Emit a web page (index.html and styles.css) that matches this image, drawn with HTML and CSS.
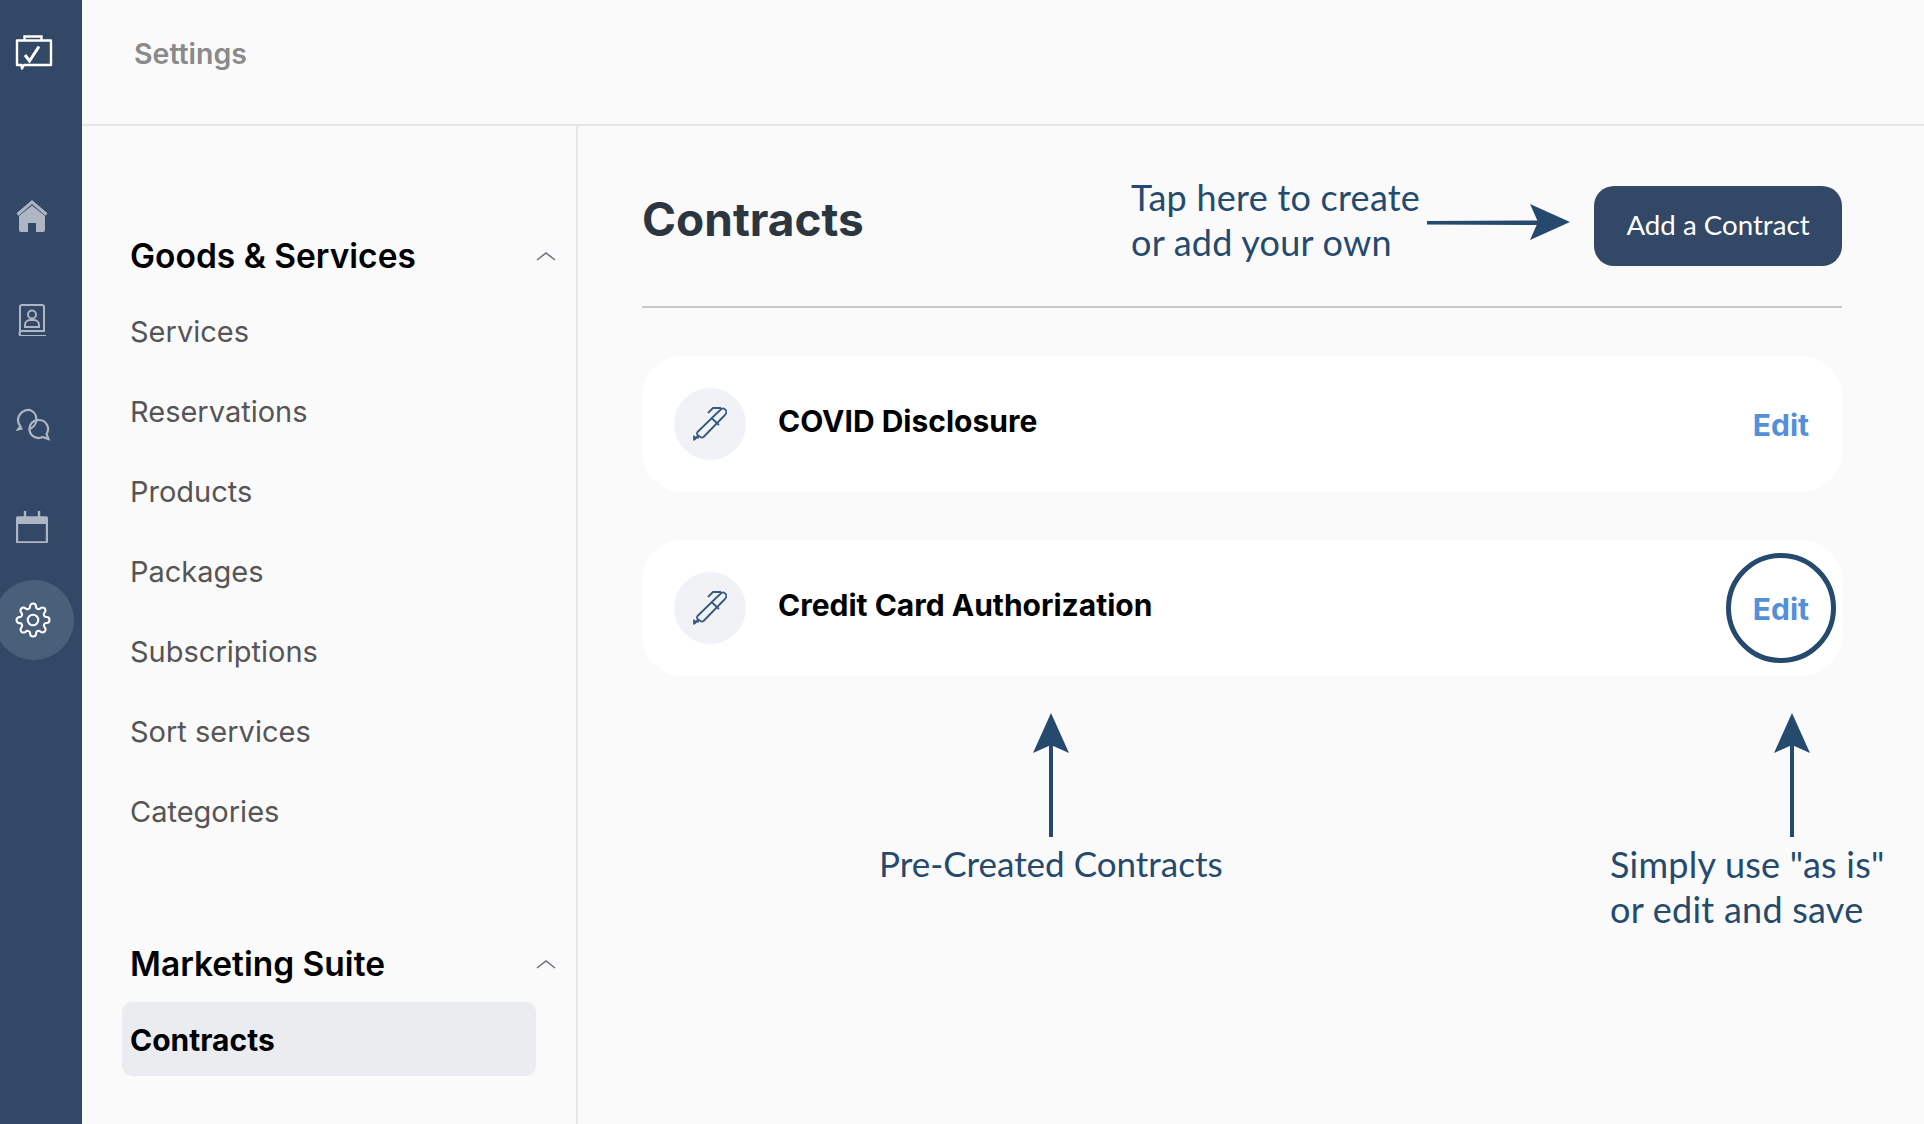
FILE: index.html
```html
<!DOCTYPE html>
<html lang="en">

<head>
    <meta charset="UTF-8">
    <meta name="viewport" content="width=device-width, initial-scale=1.0">
    <title>Settings - Contracts</title>
    <link rel="stylesheet" href="styles.css">
</head>

<body>

    <div class="app">
        <nav class="rail">
            <svg class="rail-logo" width="38" height="38" viewBox="0 0 38 38" fill="none" stroke="#fff" stroke-width="2.400">
                <path d="M2 6.500h34v24.500H9l-2 3.500-.5-3.500H2z" stroke-linejoin="round" />
                <path d="M9.500 6V2.500h17V6" />
                <path d="M10 21l4.500 6L24 12.500" stroke-width="3" />
            </svg>
            <svg class="rail-icon rail-home" width="32" height="32" viewBox="0 0 32 32">
                <path d="M1.500 14.500L16 2l14.500 12.500" fill="none" stroke="#aeb6c4" stroke-width="3" />
                <path d="M3 16L16 5.500 29 16v14a2 2 0 0 1-2 2h-7v-9h-8v9H5a2 2 0 0 1-2-2z" fill="#aeb6c4" />
            </svg>
            <svg class="rail-icon rail-book" width="32" height="32" viewBox="0 0 32 32" fill="none" stroke="#aeb6c4" stroke-width="2">
                <path d="M4 27V3a2 2 0 0 1 2-2h20a2 2 0 0 1 2 2v24H6a2.500 2.500 0 0 0 0 5h24" />
                <circle cx="16" cy="10.500" r="4" />
                <path d="M9 23v-2a5 5 0 0 1 5-5h4a5 5 0 0 1 5 5v2z" />
            </svg>
            <svg class="rail-icon rail-chat" width="34" height="34" viewBox="0 0 34 34" fill="none" stroke="#aeb6c4" stroke-width="2.200">
                <path d="M13 22a10 10 0 0 0 1-19 10.500 10.500 0 0 0-12 10c0 3 1 5 2.500 6.500L2 22.500l4.500-1" />
                <path d="M23 13a9 9 0 1 0 3.500 17l6 2-2-5A9 9 0 0 0 23 13z" />
            </svg>
            <svg class="rail-icon rail-cal" width="32" height="32" viewBox="0 0 32 32">
                <path d="M2 6.500h28a1.500 1.500 0 0 1 1 1.500v22a1.500 1.500 0 0 1-1.500 1.500h-27A1.500 1.500 0 0 1 1 30V8a1.500 1.500 0 0 1 1-1.500z" fill="none" stroke="#aeb6c4" stroke-width="2.400" />
                <path d="M1 6.500h30V13H1z" fill="#aeb6c4" />
                <path d="M9 0v9M23 0v9" stroke="#aeb6c4" stroke-width="2.400" />
            </svg>
            <div class="rail-active">
                <svg width="36" height="36" viewBox="0 0 24 24" fill="none" stroke="#fff" stroke-width="1.400">
                    <circle cx="12" cy="12" r="3.500" />
                    <path d="M19.400 15a1.650 1.650 0 0 0 .33 1.820l.06.06a2 2 0 0 1 0 2.830 2 2 0 0 1-2.830 0l-.06-.06a1.650 1.650 0 0 0-1.820-.33 1.650 1.650 0 0 0-1 1.510V21a2 2 0 0 1-2 2 2 2 0 0 1-2-2v-.09A1.650 1.650 0 0 0 9 19.400a1.650 1.650 0 0 0-1.820.33l-.06.06a2 2 0 0 1-2.830 0 2 2 0 0 1 0-2.830l.06-.06a1.650 1.650 0 0 0 .33-1.820 1.650 1.650 0 0 0-1.510-1H3a2 2 0 0 1-2-2 2 2 0 0 1 2-2h.09A1.650 1.650 0 0 0 4.600 9a1.650 1.650 0 0 0-.33-1.820l-.06-.06a2 2 0 0 1 0-2.830 2 2 0 0 1 2.830 0l.06.06a1.650 1.650 0 0 0 1.820.33H9a1.650 1.650 0 0 0 1-1.510V3a2 2 0 0 1 2-2 2 2 0 0 1 2 2v.09a1.650 1.650 0 0 0 1 1.510 1.650 1.650 0 0 0 1.820-.33l.06-.06a2 2 0 0 1 2.830 0 2 2 0 0 1 0 2.830l-.06.06a1.650 1.650 0 0 0-.33 1.820V9a1.650 1.650 0 0 0 1.510 1H21a2 2 0 0 1 2 2 2 2 0 0 1-2 2h-.09a1.650 1.650 0 0 0-1.510 1z" />
                </svg>
            </div>
        </nav>

        <div class="page">
            <header class="topbar">Settings</header>

            <div class="columns">
                <aside class="sidebar">
                    <div class="side-head side-head-first">
                        <span>Goods &amp; Services</span>
                        <svg width="20" height="10" viewBox="0 0 20 10" fill="none" stroke="#68707c" stroke-width="1.500"><path d="M1 9l9-7 9 7" /></svg>
                    </div>
                    <a class="side-link">Services</a>
                    <a class="side-link">Reservations</a>
                    <a class="side-link">Products</a>
                    <a class="side-link">Packages</a>
                    <a class="side-link">Subscriptions</a>
                    <a class="side-link">Sort services</a>
                    <a class="side-link">Categories</a>

                    <div class="side-head side-head-second">
                        <span>Marketing Suite</span>
                        <svg width="20" height="10" viewBox="0 0 20 10" fill="none" stroke="#68707c" stroke-width="1.500"><path d="M1 9l9-7 9 7" /></svg>
                    </div>
                    <a class="side-link side-link-active">Contracts</a>
                </aside>

                <main class="main">
                    <div class="main-head">
                        <h1>Contracts</h1>
                        <button class="add-btn">Add a Contract</button>
                    </div>

                    <div class="card">
                        <div class="pen-wrap">
                            <svg width="34" height="34" viewBox="0 0 34 34" fill="none" stroke="#38597f" stroke-width="1.800" stroke-linejoin="round">
                                <path d="M4.500 25L23.500 6.500 29 1.500c2-.5 4.500 1.500 4.500 4L32 8 10.500 30c-1 .8-2 .8-3 0L4.500 28c-.7-1-.7-2 0-3z" />
                                <path d="M18.500 11l7.500 7M15 6l5-5h8" />
                                <path d="M5 29l-3.500 3.500M1 28.500v5M1 30.500h5" />
                            </svg>
                        </div>
                        <span class="card-title">COVID Disclosure</span>
                        <a class="edit">Edit</a>
                    </div>

                    <div class="card">
                        <div class="pen-wrap">
                            <svg width="34" height="34" viewBox="0 0 34 34" fill="none" stroke="#38597f" stroke-width="1.800" stroke-linejoin="round">
                                <path d="M4.500 25L23.500 6.500 29 1.500c2-.5 4.500 1.500 4.500 4L32 8 10.500 30c-1 .8-2 .8-3 0L4.500 28c-.7-1-.7-2 0-3z" />
                                <path d="M18.500 11l7.500 7M15 6l5-5h8" />
                                <path d="M5 29l-3.500 3.500M1 28.500v5M1 30.500h5" />
                            </svg>
                        </div>
                        <span class="card-title">Credit Card Authorization</span>
                        <a class="edit edit-circled">Edit</a>
                    </div>
                </main>
            </div>
        </div>
    </div>

    <!-- annotations drawn on top of the screenshot -->
    <p class="note note-tap">Tap here to create<br>or add your own</p>
    <p class="note note-pre">Pre-Created Contracts</p>
    <p class="note note-simple">Simply use "as is"<br>or edit and save</p>

    <svg class="arrow arrow-right" width="145" height="38" viewBox="0 0 145 38">
        <path d="M0 17L115 16.500V21L0 20.500zM103 0L143 18 103 36 111 18z" fill="#254a6e" />
    </svg>
    <svg class="arrow arrow-up-left" width="38" height="126" viewBox="0 0 38 126">
        <path d="M17 124L17 30H21L21 124zM19 0L37 40 19 32 1 40z" fill="#254a6e" />
    </svg>
    <svg class="arrow arrow-up-right" width="38" height="126" viewBox="0 0 38 126">
        <path d="M17 124L17 30H21L21 124zM19 0L37 40 19 32 1 40z" fill="#254a6e" />
    </svg>

</body>

</html>
```

FILE: styles.css
```css
* {
    margin: 0;
    padding: 0;
    box-sizing: border-box;
}

html,
body {
    height: 100%;
    overflow: hidden;
}

body {
    position: relative;
    font-family: Inter, "Liberation Sans", sans-serif;
    background-color: #fafafa;
}

.app {
    display: flex;
    height: 100%;
}

/* left icon rail */
.rail {
    width: 82px;
    flex-shrink: 0;
    background-color: #334866;
    display: flex;
    flex-direction: column;
    align-items: flex-start;
    overflow: hidden;
}

.rail-logo {
    margin: 34px 0 0 15px;
}

.rail-icon {
    margin-left: 16px;
}

.rail-home {
    margin-top: 128px;
}

.rail-book {
    margin-top: 72px;
}

.rail-chat {
    margin-top: 71px;
}

.rail-cal {
    margin-top: 70px;
}

.rail-active {
    width: 80px;
    height: 80px;
    margin: 37px 0 0 -6px;
    border-radius: 50%;
    background-color: #4a5f7a;
    display: flex;
    align-items: center;
    justify-content: center;
}

.rail-active svg {
    margin-left: -2px;
}

.page {
    flex: 1;
    display: flex;
    flex-direction: column;
    min-width: 0;
}

.topbar {
    height: 126px;
    flex-shrink: 0;
    padding: 36px 0 0 52px;
    border-bottom: 2px solid #e6e6e6;
    font-size: 28.500px;
    font-weight: 600;
    line-height: 36px;
    color: #8a8a8a;
}

.columns {
    flex: 1;
    display: flex;
    min-height: 0;
}

/* settings menu */
.sidebar {
    width: 496px;
    flex-shrink: 0;
    border-right: 2px solid #e6e6e6;
    padding-left: 40px;
}

.side-head {
    display: flex;
    align-items: center;
    justify-content: space-between;
    width: 434px;
    padding-left: 8px;
    font-size: 33.500px;
    font-weight: 600;
    line-height: 44px;
    color: #000;
}

.side-head-first {
    margin-top: 108px;
}

.side-head-second {
    margin-top: 93px;
}

.side-link {
    display: block;
    width: 414px;
    height: 74px;
    margin-top: 6px;
    padding-left: 8px;
    font-size: 29px;
    line-height: 74px;
    color: #555;
}

.side-head + .side-link {
    margin-top: 17px;
}

.side-head + .side-link-active {
    margin-top: 16px;
    line-height: 76px;
}

.side-link-active {
    font-size: 30px;
    font-weight: 700;
    color: #000;
    background-color: #ebecf0;
    border-radius: 10px;
}

/* contracts list */
.main {
    flex: 1;
    padding: 60px 82px 0 64px;
}

.main-head {
    display: flex;
    justify-content: space-between;
    align-items: flex-start;
    padding-bottom: 40px;
    border-bottom: 2px solid #c8c8c8;
    margin-bottom: 48px;
}

h1 {
    margin-top: 1px;
    font-size: 46px;
    font-weight: 700;
    line-height: 64px;
    color: #2b3640;
}

.add-btn {
    width: 248px;
    height: 80px;
    padding-bottom: 4px;
    border: none;
    border-radius: 20px;
    background-color: #334866;
    color: #fff;
    font-family: Lato, sans-serif;
    font-size: 27.700px;
    cursor: pointer;
}

.card {
    display: flex;
    align-items: center;
    height: 136px;
    margin-bottom: 48px;
    padding: 0 32px;
    border-radius: 40px;
    background-color: #fff;
}

.pen-wrap {
    width: 72px;
    height: 72px;
    border-radius: 50%;
    background-color: #f0f2f6;
    display: flex;
    align-items: center;
    justify-content: center;
}

.card-title {
    flex: 1;
    margin: 0 0 6px 32px;
    font-size: 30px;
    font-weight: 700;
    color: #000;
}

.edit {
    position: relative;
    margin: 2px 1px 0 0;
    font-size: 30px;
    font-weight: 700;
    color: #5390d9;
}

/* ring is part of the annotation layer */
.edit-circled::after {
    content: "";
    box-sizing: border-box;
    position: absolute;
    left: 50%;
    top: calc(50% - 1px);
    width: 110px;
    height: 110px;
    transform: translate(-50%, -50%);
    border: 5px solid #254a6e;
    border-radius: 50%;
}

.note {
    position: absolute;
    font-family: Lato, sans-serif;
    font-size: 36px;
    line-height: 45px;
    letter-spacing: 0.250px;
    color: #254a6e;
}

.note-tap {
    left: 1131px;
    top: 175px;
}

.note-pre {
    left: 879px;
    top: 841px;
    font-size: 35px;
    letter-spacing: 0;
}

.note-simple {
    left: 1610px;
    top: 842px;
}

.arrow {
    position: absolute;
}

.arrow-right {
    left: 1427px;
    top: 204px;
}

.arrow-up-left {
    left: 1032px;
    top: 713px;
}

.arrow-up-right {
    left: 1773px;
    top: 713px;
}
```
